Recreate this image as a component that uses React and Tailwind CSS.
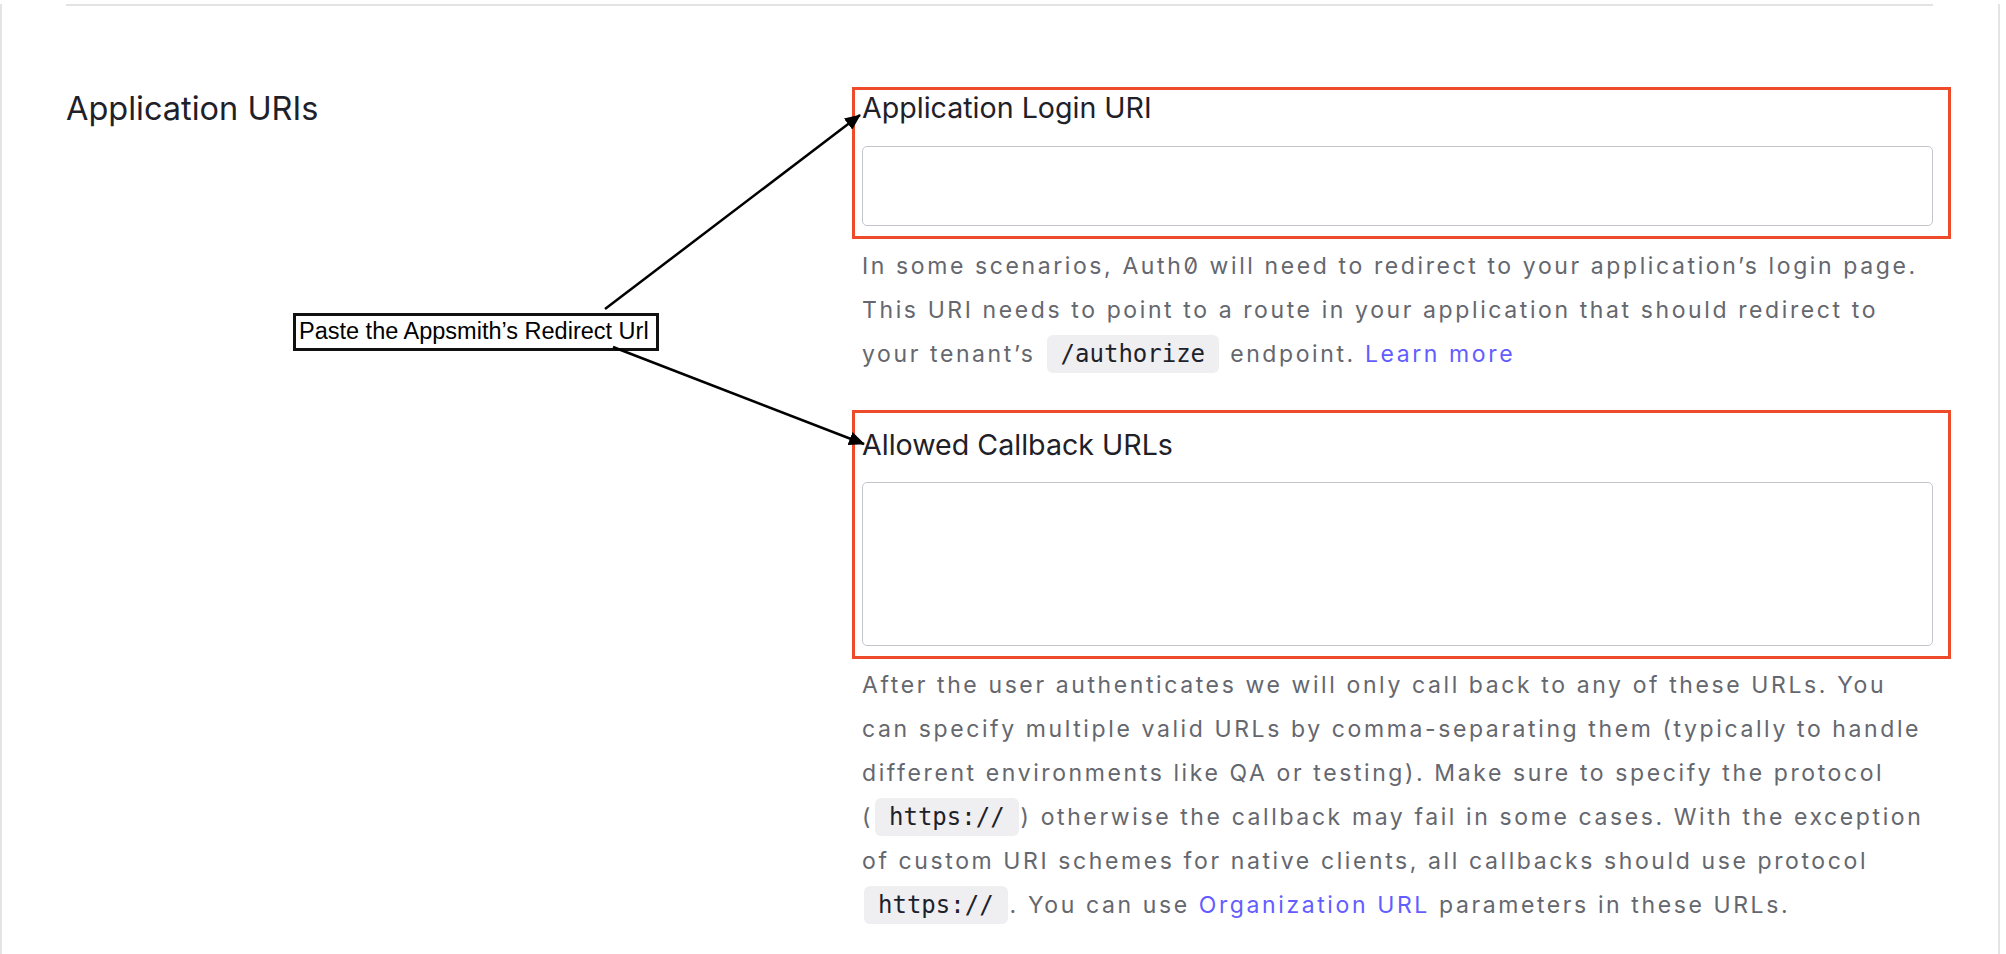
import React from "react";

function Code({ children }) {
  return (
    <span className="mx-[2px] rounded-md bg-[#efeff1] px-[14px] py-[5px] font-['DejaVu_Sans_Mono',monospace] text-[24px] tracking-normal text-[#1e212a]">
      {children}
    </span>
  );
}

function Link({ children }) {
  return <a className="text-[#635dff]">{children}</a>;
}

function App() {
  return (
    <div className="relative h-[954px] w-[2006px] bg-white font-['Inter',sans-serif]">
      <div className="h-[954px] w-[2000px] border-x-2 border-[#e4e4e6]">
        {/* top divider */}
        <div className="ml-[64px] mt-[4px] h-[2px] w-[1867px] bg-[#e3e3e6]" />

        <div className="mt-[81px] flex">
          {/* left side */}
          <div className="w-[850px] pl-[64px] pt-[4px]">
            <h2 className="text-[32.5px] font-normal leading-[36px] text-[#1f2129]">
              Application URIs
            </h2>
          </div>

          {/* right side */}
          <div className="w-[1099px]">
            <div className="border-[3px] border-[#ee4b2b] pb-[10px] pl-[7px] pr-[15px] pt-[2px]">
              <label className="block text-[28.6px] leading-[32px] text-[#1f2129]">
                Application Login URI
              </label>
              <input
                type="text"
                className="mt-[22px] block h-[80px] w-full rounded-[5px] border-[1.5px] border-[#c4c5ca] bg-white"
              />
            </div>
            <p className="mt-[5px] pl-[10px] text-[23px] leading-[44px] tracking-[2.6px] text-[#65676e] [font-feature-settings:'zero']">
              In some scenarios, Auth0 will need to redirect to your application’s login page.
              <br />
              This URI needs to point to a route in your application that should redirect to
              <br />
              your tenant’s <Code>/authorize</Code> endpoint. <Link>Learn more</Link>
            </p>

            <div className="mt-[34px] border-[3px] border-[#ee4b2b] pb-[10px] pl-[7px] pr-[15px] pt-[16px]">
              <label className="block text-[28.6px] leading-[32px] text-[#1f2129]">
                Allowed Callback URLs
              </label>
              <textarea className="mt-[21px] block h-[164px] w-full resize-none rounded-[5px] border-[1.5px] border-[#c4c5ca] bg-white" />
            </div>
            <p className="mt-[4px] pl-[10px] text-[23px] leading-[44px] tracking-[2.6px] text-[#65676e]">
              After the user authenticates we will only call back to any of these URLs. You
              <br />
              can specify multiple valid URLs by comma-separating them (typically to handle
              <br />
              different environments like QA or testing). Make sure to specify the protocol
              <br />
              (<Code>https://</Code>) otherwise the callback may fail in some cases. With the exception
              <br />
              of custom URI schemes for native clients, all callbacks should use protocol
              <br />
              <Code>https://</Code>. You can use <Link>Organization URL</Link> parameters in these URLs.
            </p>
          </div>
        </div>
      </div>

      {/* annotation callout */}
      <div className="absolute left-[293px] top-[309px] flex h-[38px] w-[366px] items-center border-[3px] border-[#111111] bg-white pl-[3px] font-['Liberation_Sans',Arial,sans-serif] text-[23.5px] leading-none text-black">
        Paste the Appsmith’s Redirect Url
      </div>
      <svg
        className="pointer-events-none absolute left-0 top-0"
        width="2006"
        height="954"
        viewBox="0 0 2006 954"
      >
        <defs>
          <marker
            id="head"
            markerUnits="userSpaceOnUse"
            markerWidth="16"
            markerHeight="14"
            refX="15"
            refY="7"
            orient="auto"
          >
            <path d="M0 0 L16 7 L0 14 Z" fill="#000" />
          </marker>
        </defs>
        <line x1="605" y1="305" x2="860" y2="111" stroke="#000" strokeWidth="2.5" markerEnd="url(#head)" />
        <line x1="613" y1="343" x2="864" y2="440" stroke="#000" strokeWidth="2.5" markerEnd="url(#head)" />
      </svg>
    </div>
  );
}

export default App;
